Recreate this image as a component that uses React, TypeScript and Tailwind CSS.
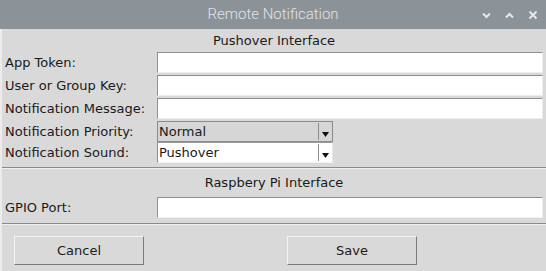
import React from "react";

const F = { fontFamily: '"DejaVu Sans", sans-serif' };

function Entry() {
  return (
    <div className="h-[21px] flex-1 bg-white border border-t-[#8f8f8f] border-l-[#8f8f8f] border-r-[#eeeeee] border-b-[#eeeeee] mr-[3px]" />
  );
}

function Combo({ value, grey }: { value: string; grey?: boolean }) {
  return (
    <div
      className={`h-[21px] w-[176px] flex items-center border ${grey ? "bg-[#d6d6d6] border-[#8c8c8c]" : "bg-white border-t-[#9a9a9a] border-l-[#8c8c8c] border-r-[#e8e8e8] border-b-[#f2f2f2]"}`}
    >
      <span className="flex-1 pl-[1px] text-[13px] leading-none text-[#1a1a1a]">{value}</span>
      <div className="w-[13px] h-[17px] mr-[1px] flex items-end justify-center pb-[3px] border-l border-[#8c8c8c]">
        <svg width="7" height="5" viewBox="0 0 7 5"><path d="M0 0h7L3.5 5z" fill="#111" /></svg>
      </div>
    </div>
  );
}

function Row({ label, children, h }: { label: string; children: React.ReactNode; h: string }) {
  return (
    <div className={`flex items-start ${h}`}>
      <div className="w-[155px] h-[21px] flex items-center pl-[3px] text-[13px] text-[#1a1a1a] leading-none">{label}</div>
      {children}
    </div>
  );
}

function Button({ label }: { label: string }) {
  return (
    <div className="w-[130px] h-[29px] flex items-center justify-center text-[13px] text-[#1a1a1a] bg-[#d9d9d9] border border-t-[#f4f4f4] border-l-[#f4f4f4] border-r-[#7a7a7a] border-b-[#7a7a7a]">
      {label}
    </div>
  );
}

export default function App() {
  return (
    <div className="w-[546px] h-[271px] bg-[#d9d9d9] flex flex-col overflow-hidden" style={F}>
      <div className="h-[29px] bg-[#8b9298] flex items-center relative shrink-0">
        <div
          className="w-full text-center text-[15px] text-[#e2e4e6] font-light"
          style={{ fontFamily: 'Roboto, "Noto Sans", sans-serif' }}
        >
          Remote Notification
        </div>
        <div className="absolute right-[8px] top-[10px] flex items-center gap-[14px]">
          <svg width="9" height="7" viewBox="0 0 9 7"><path d="M1 1.5l3.5 3.5L8 1.5" stroke="#e6e8ea" strokeWidth="2" fill="none" /></svg>
          <svg width="9" height="7" viewBox="0 0 9 7"><path d="M1 5.5l3.5-3.5L8 5.5" stroke="#e6e8ea" strokeWidth="2" fill="none" /></svg>
          <svg width="10" height="10" viewBox="0 0 10 10"><path d="M1.5 1.5l7 7M8.5 1.5l-7 7" stroke="#e6e8ea" strokeWidth="2" fill="none" /></svg>
        </div>
      </div>
      <div className="flex-1 flex flex-col border-l-2 border-[#ececec]">
        <div className="h-[23px] flex items-center justify-center text-[13px] text-[#1a1a1a] pt-[1px]">
          Pushover Interface
        </div>
        <Row label="App Token:" h="h-[23px]"><Entry /></Row>
        <Row label="User or Group Key:" h="h-[23px]"><Entry /></Row>
        <Row label="Notification Message:" h="h-[23px]"><Entry /></Row>
        <Row label="Notification Priority:" h="h-[21px]"><Combo value="Normal" grey /></Row>
        <Row label="Notification Sound:" h="h-[21px]"><Combo value="Pushover" /></Row>
        <div className="mt-[4px] h-[2px] border-t border-[#8a8a8a] border-b border-b-[#f0f0f0]" />
        <div className="h-[28px] flex items-center justify-center text-[13px] text-[#1a1a1a]">
          Raspbery Pi Interface
        </div>
        <Row label="GPIO Port:" h="h-[21px]"><Entry /></Row>
        <div className="mt-[5px] h-[2px] border-t border-[#8a8a8a] border-b border-b-[#f0f0f0]" />
        <div className="flex mt-[11px]">
          <div className="ml-[12px]"><Button label="Cancel" /></div>
          <div className="ml-[143px]"><Button label="Save" /></div>
        </div>
      </div>
    </div>
  );
}
